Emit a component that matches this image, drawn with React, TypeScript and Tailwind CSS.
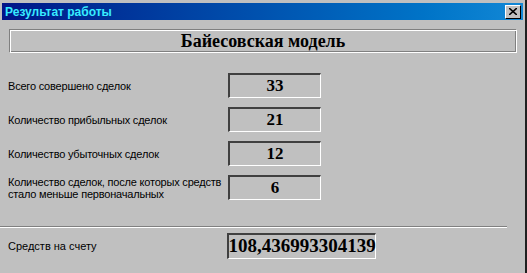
const ROWS = [
  { label: "Всего совершено сделок", value: "33" },
  { label: "Количество прибыльных сделок", value: "21" },
  { label: "Количество убыточных сделок", value: "12" },
  {
    label: "Количество сделок, после которых средств\nстало меньше первоначальных",
    value: "6",
  },
];

function ValueBox({ value, wide }: { value: string; wide?: boolean }) {
  return (
    <div
      className={
        "flex items-center justify-center border-t-2 border-l-2 border-r border-b border-t-[#404040] border-l-[#404040] border-r-white border-b-white bg-[#c0c0c0] font-bold text-black " +
        (wide ? "h-[26px] w-[149px] text-[19px]" : "h-[25px] w-[93px] text-[17px]")
      }
      style={{ fontFamily: '"Liberation Serif", "Times New Roman", serif' }}
    >
      {value}
    </div>
  );
}

export default function App() {
  return (
    <div
      className="flex h-[273px] w-[527px] flex-col border-r-2 border-r-[#202020] bg-[#c0c0c0] pt-[3px]"
      style={{ fontFamily: '"Liberation Sans", Arial, sans-serif' }}
    >
      <div className="mx-[2px] flex h-[17px] items-center justify-between bg-gradient-to-r from-[#021488] to-[#1288d6] pl-[3px] pr-[2px]">
        <span className="text-[12px] font-bold leading-none text-[#38ecff]">Результат работы</span>
        <button className="flex h-[14px] w-[16px] items-center justify-center border border-t-white border-l-white border-r-black border-b-black bg-[#c0c0c0]">
          <svg width="8" height="7" viewBox="0 0 8 7">
            <path d="M0 0 L8 7 M8 0 L0 7" stroke="black" strokeWidth="1.6" />
          </svg>
        </button>
      </div>

      <div className="mx-[9px] mt-[9px] flex h-[24px] w-[508px] items-center justify-center border border-t-[#808080] border-l-[#808080] border-r-white border-b-white shadow-[inset_1px_1px_0_white,inset_-1px_-1px_0_#808080]">
        <span
          className="text-[18px] font-bold text-black"
          style={{ fontFamily: '"Liberation Serif", "Times New Roman", serif' }}
        >
          Байесовская модель
        </span>
      </div>

      <div className="mt-[20px] flex flex-col gap-[9px] pl-[8px]">
        {ROWS.map((r) => (
          <div key={r.value} className="flex items-center">
            <span className="w-[220px] whitespace-pre-line pr-[2px] text-[11px] leading-[12px] tracking-[-0.2px] text-black">
              {r.label}
            </span>
            <ValueBox value={r.value} />
          </div>
        ))}
      </div>

      <div className="mt-[26px] h-[2px] w-[507px] border-t border-b border-t-[#808080] border-b-white" />

      <div className="mt-[5px] flex items-center pl-[8px]">
        <span className="w-[219px] text-[11px] text-black">Средств на счету</span>
        <ValueBox value="108,436993304139" wide />
      </div>
    </div>
  );
}
